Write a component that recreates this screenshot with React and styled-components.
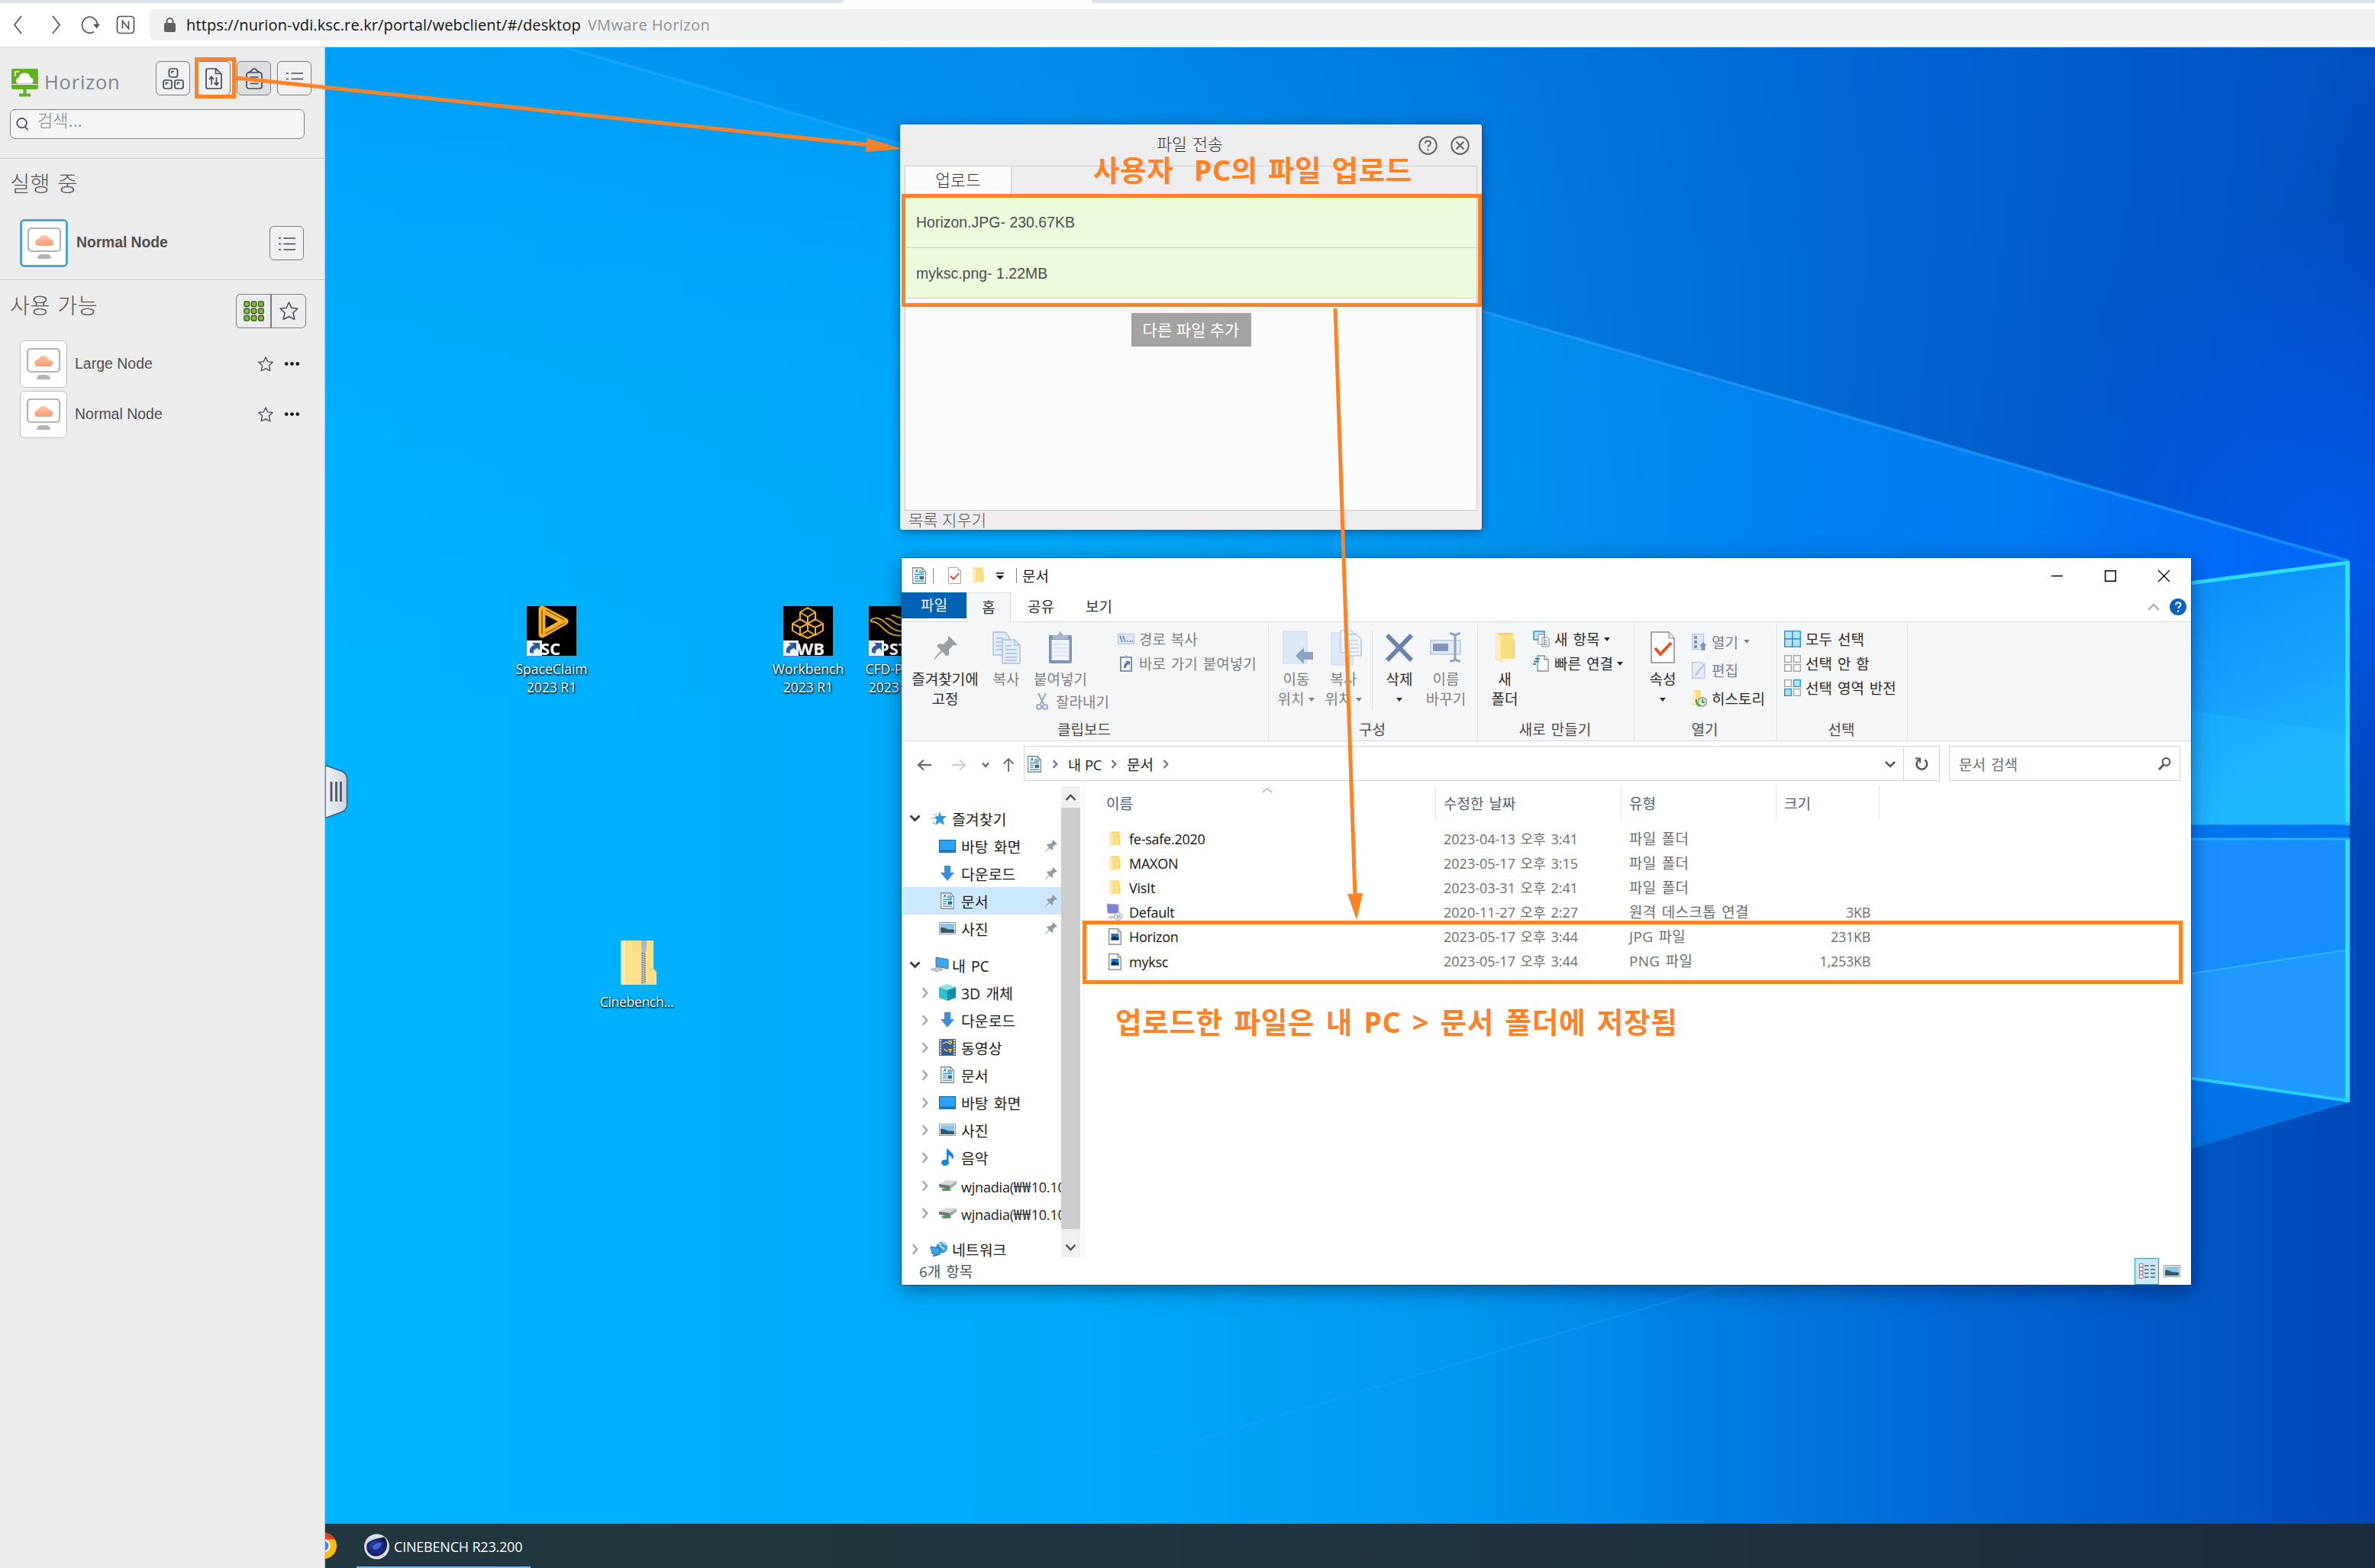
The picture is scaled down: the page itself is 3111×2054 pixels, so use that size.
import React from "react";
import styled, { createGlobalStyle } from "styled-components";

const ORANGE = "#ff8227";

const GlobalStyle = createGlobalStyle`
  * { box-sizing: border-box; }
  html, body { margin: 0; padding: 0; overflow: hidden; }
  body {
    font-family: "Open Sans", "Noto Sans CJK KR", sans-serif;
    font-size: 19px;
    color: #1b1b1b;
  }
`;

/* ---------- shared ---------- */
const Screen = styled.div`
  position: relative;
  width: 3111px;
  height: 2054px;
  display: flex;
  flex-direction: column;
  overflow: hidden;
  background: #fff;
`;
const Svg = styled.svg`
  display: block;
  flex: none;
  overflow: visible;
`;
const Text = styled.span`
  font-size: ${(p) => p.$size || 19}px;
  color: ${(p) => p.$color || "inherit"};
  letter-spacing: ${(p) => p.$ls || 0}px;
  word-spacing: ${(p) => p.$ws || 0}px;
  font-weight: ${(p) => p.$weight || 400};
  margin-left: ${(p) => p.$ml || 0}px;
  white-space: pre;
`;

/* ---------- browser chrome ---------- */
const TabStrip = styled.div`
  height: 4px;
  flex: none;
  background: #dde1ea;
  padding-left: 1105px;
`;
const ActiveTab = styled.div`
  width: 325px;
  height: 4px;
  background: #fdfdfe;
`;
const AddressBar = styled.div`
  height: 58px;
  flex: none;
  display: flex;
  align-items: center;
  padding-left: 16px;
  padding-bottom: 1px;
  border-bottom: 1px solid #d9dcdd;
  background: #fff;
`;
const NavIcons = styled.div`
  width: 180px;
  display: flex;
  align-items: center;
`;
const UrlField = styled.div`
  flex: 1;
  height: 41px;
  display: flex;
  align-items: center;
  padding-left: 19px;
  border-radius: 7px 0 0 7px;
  background: #eff1f2;
`;

/* ---------- body ---------- */
const Body = styled.div`
  flex: 1;
  display: flex;
  min-height: 0;
`;
const Sidebar = styled.aside`
  width: 426px;
  flex: none;
  background: #ececec;
  border-right: 1px solid #bcc4c8;
  font-family: "Liberation Sans", "Noto Sans CJK KR", sans-serif;
`;
const SideSection = styled.section`
  height: ${(p) => p.$h}px;
  border-bottom: ${(p) => (p.$last ? "none" : "1px solid #bdbdbd")};
  box-shadow: ${(p) => (p.$last ? "none" : "0 1px 0 #fafafa")};
`;
const SideTop = styled.div`
  display: flex;
  padding: 18px 0 0 15px;
  height: 81px;
`;
const Logo = styled.div`
  width: 189px;
  display: flex;
  padding-top: 10px;
  gap: 8px;
  font-family: "Open Sans", sans-serif;
`;
const LogoText = styled.span`
  font-size: 25.5px;
  line-height: 34px;
  font-weight: 500;
  color: #7c8790;
  letter-spacing: 0.8px;
`;
const ToolRow = styled.div`
  display: flex;
  gap: 8px;
`;
const ToolButton = styled.button`
  width: 45px;
  height: 45px;
  padding: 0;
  display: flex;
  align-items: center;
  justify-content: center;
  border: 1.5px solid #7b7e80;
  border-radius: 6px;
  background: ${(p) => (p.$on ? "#dddedf" : "#f0f0f0")};
`;
const SearchBox = styled.div`
  width: 386px;
  height: 39px;
  margin-left: 13px;
  padding: 0 0 0 7px;
  display: flex;
  align-items: center;
  gap: 11px;
  border: 1.5px solid #808080;
  border-radius: 7px;
  background: #f5f5f5;
`;
const SearchHint = styled.span`
  font-size: 22px;
  font-weight: 300;
  line-height: 28px;
  margin-bottom: 8px;
  color: #858585;
`;
const SideTitle = styled.h2`
  margin: 0;
  font-size: 28.5px;
  font-weight: 300;
  line-height: 40px;
  word-spacing: 2px;
  color: #555;
`;
const TitleRow = styled.div`
  display: flex;
  justify-content: space-between;
  align-items: flex-start;
  padding: ${(p) => p.$pt}px 24px 0 13px;
  height: ${(p) => p.$h}px;
`;
const Segmented = styled.div`
  width: 92px;
  height: 45px;
  display: flex;
  border: 1.5px solid #7b7e80;
  border-radius: 6px;
  margin-top: 4px;
`;
const Segment = styled.div`
  flex: 1;
  display: flex;
  align-items: center;
  justify-content: center;
  border-right: ${(p) => (p.$split ? "2px solid #7b7e80" : "none")};
`;
const NodeRow = styled.div`
  height: ${(p) => (p.$active ? 63 : 66)}px;
  display: flex;
  align-items: ${(p) => (p.$active ? "center" : "flex-start")};
  padding: 0 ${(p) => (p.$active ? 27 : 33)}px 0 26px;
`;
const NodeTile = styled.div`
  width: ${(p) => (p.$active ? 63 : 62)}px;
  height: ${(p) => (p.$active ? 63 : 62)}px;
  display: flex;
  align-items: center;
  justify-content: center;
  border-radius: 6px;
  background: #fff;
  border: ${(p) => (p.$active ? "3px solid #50a6cc" : "1px solid #bdbdbd")};
`;
const NodeName = styled.span`
  flex: 1;
  padding-left: ${(p) => (p.$active ? 11 : 10)}px;
  padding-bottom: ${(p) => (p.$active ? 3 : 0)}px;
  font-size: 19.4px;
  line-height: 60px;
  font-weight: ${(p) => (p.$active ? 700 : 400)};
  letter-spacing: ${(p) => (p.$active ? -0.1 : 0.05)}px;
  color: #4f4f4f;
`;
const NodeTools = styled.div`
  height: 62px;
  display: flex;
  align-items: center;
  gap: 15px;
`;

/* ---------- remote desktop ---------- */
const Desktop = styled.main`
  position: relative;
  flex: 1;
  overflow: hidden;
  background: #00a8fb;
`;
const Wallpaper = styled.svg`
  position: absolute;
  inset: 0;
`;
const Placed = styled.div`
  position: absolute;
  left: ${(p) => p.$x}px;
  top: ${(p) => p.$y}px;
`;
const Shortcut = styled(Placed)`
  width: 130px;
  display: flex;
  flex-direction: column;
  align-items: center;
  text-align: center;
`;
const ShortcutLabel = styled.span`
  margin-top: ${(p) => p.$mt}px;
  font-size: 17.5px;
  line-height: 24.3px;
  letter-spacing: ${(p) => p.$ls || 0}px;
  color: #fff;
  white-space: pre;
  text-shadow: 1px 1px 3px #000, 0 1px 2px rgba(0, 0, 0, 0.8);
`;
const Taskbar = styled(Placed)`
  width: 100%;
  height: 58px;
  display: flex;
  align-items: center;
  background: linear-gradient(90deg, #22373f, #20343f 50%, #1c2b3d);
`;
const TaskButton = styled.div`
  width: 228px;
  height: 58px;
  margin-left: 26px;
  padding: 4px 0 0 10px;
  display: flex;
  align-items: center;
  gap: 6px;
  border-bottom: 2px solid #76b9ed;
  color: #fff;
`;

/* ---------- file transfer dialog ---------- */
const Dialog = styled(Placed)`
  width: 762px;
  height: 531px;
  padding: 0 5.5px 0 6.5px;
  display: flex;
  flex-direction: column;
  border-radius: 3px;
  background: #ededed;
  box-shadow: 0 2px 14px rgba(0, 20, 70, 0.5), 0 0 0 1px rgba(90, 110, 130, 0.4);
`;
const DialogHead = styled.div`
  height: 54px;
  display: grid;
  grid-template-columns: 1fr auto 1fr;
  align-items: center;
`;
const DialogTitle = styled.span`
  font-size: 21.5px;
  font-weight: 300;
  line-height: 30px;
  word-spacing: 2px;
  color: #333;
  margin: 0 3px 3px 0;
`;
const HeadTools = styled.div`
  display: flex;
  justify-content: flex-end;
  gap: 17px;
  padding-right: 10px;
`;
const DialogPanel = styled.div`
  height: 452px;
  border: 1px solid #c9c9c9;
  background: #fcfcfc;
`;
const DialogTabs = styled.div`
  height: 38px;
  background: #ededed;
`;
const DialogTab = styled.div`
  width: 139px;
  height: 38px;
  line-height: 36px;
  text-align: center;
  background: #fcfcfc;
  border-right: 1px solid #c9c9c9;
`;
const FileLine = styled.div`
  height: ${(p) => p.$h}px;
  padding-left: 14px;
  padding-top: ${(p) => p.$pt || 0}px;
  line-height: 67px;
  background: #ebfbdc;
  border-bottom: 1px solid #c6d0bd;
  font-family: "Liberation Sans", sans-serif;
  font-size: 19.4px;
  letter-spacing: 0.05px;
  color: #4d4d4d;
`;
const AddFile = styled.button`
  display: block;
  width: 157px;
  height: 44px;
  margin: 19px auto 0;
  padding: 0 0 3px;
  border: 0;
  background: #a3a3a1;
  color: #fff;
  font: 400 21px "Open Sans", "Noto Sans CJK KR", sans-serif;
  white-space: nowrap;
`;
const DialogFoot = styled.div`
  line-height: 24px;
  padding-left: 5px;
`;

/* ---------- explorer ---------- */
const Explorer = styled(Placed)`
  width: 1689px;
  height: 952px;
  display: flex;
  flex-direction: column;
  background: #fff;
  box-shadow: 0 6px 24px rgba(0, 20, 70, 0.5), 0 0 0 1px rgba(20, 90, 150, 0.6);
`;
const TitleBar = styled.div`
  height: 45px;
  flex: none;
  display: flex;
  align-items: center;
  padding: 1px 28px 0 14px;
`;
const Bar = styled.div`
  width: 1px;
  height: 20px;
  background: #8b8b8b;
  margin: 0 ${(p) => p.$mr}px 0 ${(p) => p.$ml}px;
`;
const WindowButtons = styled.div`
  margin-left: auto;
  display: flex;
  align-items: center;
  gap: 55px;
`;
const RibbonTabs = styled.div`
  height: 38px;
  flex: none;
  display: flex;
  align-items: flex-start;
  padding-right: 6px;
`;
const RibbonTab = styled.div`
  width: ${(p) => p.$w}px;
  height: ${(p) => (p.$kind === "file" ? 34 : 39)}px;
  line-height: ${(p) => (p.$kind === "file" ? 34 : 38)}px;
  text-align: center;
  position: relative;
  z-index: 1;
  color: ${(p) => (p.$kind === "file" ? "#fff" : "#333")};
  background: ${(p) => (p.$kind === "file" ? "#0063b1" : p.$kind === "open" ? "#f5f6f7" : "none")};
  border: ${(p) => (p.$kind === "open" ? "1px solid #dadbdc" : "0")};
  border-bottom: 0;
`;
const RibbonHelp = styled.div`
  margin-left: auto;
  height: 38px;
  display: flex;
  align-items: center;
  gap: 13px;
`;
const Ribbon = styled.div`
  height: 157px;
  flex: none;
  display: flex;
  background: #f5f6f7;
  border-top: 1px solid #dadbdc;
  border-bottom: 1px solid #d3d5d7;
`;
const Group = styled.div`
  width: ${(p) => p.$w}px;
  height: 152px;
  margin-top: 2px;
  display: flex;
  flex-direction: column;
  justify-content: space-between;
  border-right: 1px solid #dfe1e3;
`;
const GroupRow = styled.div`
  display: flex;
  align-items: flex-start;
`;
const GroupLabel = styled.div`
  text-align: center;
  line-height: 26px;
  padding-right: 2px;
  color: #4a4a4a;
  word-spacing: 2px;
`;
const GroupRule = styled.div`
  width: 1px;
  height: 105px;
  margin: 8px 0 0 ${(p) => p.$ml}px;
  background: #dcdddf;
`;
const BigButton = styled.div`
  width: ${(p) => p.$w}px;
  margin-left: ${(p) => p.$ml || 0}px;
  padding-top: 8px;
  display: flex;
  flex-direction: column;
  align-items: center;
  color: ${(p) => (p.$off ? "#7f7f7f" : "#2b2b2b")};
`;
const BigIcon = styled.div`
  height: 46px;
  display: flex;
  align-items: center;
`;
const BigLine = styled.div`
  height: 25.5px;
  line-height: 25.5px;
  display: flex;
  align-items: center;
  gap: 6px;
  white-space: nowrap;
  margin-top: ${(p) => (p.$first ? 7 : 0)}px;
`;
const SmallCol = styled.div`
  margin-left: ${(p) => p.$ml}px;
  padding-top: ${(p) => p.$pt}px;
`;
const SmallRow = styled.div`
  height: ${(p) => p.$h}px;
  display: flex;
  align-items: center;
  white-space: nowrap;
  word-spacing: 2px;
  color: ${(p) => (p.$off ? "#7f7f7f" : "#2b2b2b")};
`;
const Slot = styled.div`
  width: ${(p) => p.$w}px;
  margin-left: ${(p) => p.$ml || 0}px;
  margin-right: ${(p) => (p.$mr === undefined ? 6 : p.$mr)}px;
  flex: none;
  display: flex;
  align-items: center;
  justify-content: ${(p) => (p.$end ? "flex-end" : "center")};
`;
const Caret = styled.i`
  width: 0;
  height: 0;
  margin-left: ${(p) => p.$ml || 0}px;
  border: 4.5px solid transparent;
  border-top: 5.5px solid currentColor;
  border-bottom: 0;
`;
const PathRow = styled.div`
  height: 59px;
  flex: none;
  display: flex;
  padding: 6px 14px 7px 20px;
`;
const PathNav = styled.div`
  width: 140px;
  display: flex;
  align-items: center;
  padding-top: 3px;
`;
const PathBox = styled.div`
  width: 1200px;
  height: 46px;
  display: flex;
  align-items: center;
  padding: 1px 0 0 4px;
  border: 1px solid #d5d5d5;
`;
const Refresh = styled.div`
  width: 47px;
  height: 44px;
  margin-left: 14px;
  margin-top: -1px;
  display: flex;
  align-items: center;
  justify-content: center;
  border-left: 1px solid #d5d5d5;
`;
const SearchField = styled.div`
  flex: 1;
  height: 46px;
  margin-left: 12px;
  padding: 1px 11px 0 12px;
  display: flex;
  align-items: center;
  justify-content: space-between;
  border: 1px solid #d5d5d5;
`;
const Panes = styled.div`
  flex: 1;
  min-height: 0;
  display: flex;
`;
const Tree = styled.div`
  width: 209px;
  flex: none;
  padding: 24px 0 0 1px;
  overflow: hidden;
`;
const TreeRow = styled.div`
  height: 36px;
  margin-top: ${(p) => p.$mt || 0}px;
  display: flex;
  align-items: center;
  white-space: nowrap;
  word-spacing: 2px;
  background: ${(p) => (p.$selected ? "#cce8ff" : "none")};
`;
const TreeName = styled.span`
  flex: 1;
  overflow: hidden;
  font-size: ${(p) => (p.$latin ? 18 : 19.4)}px;
  letter-spacing: ${(p) => (p.$latin ? -0.2 : 0)}px;
`;
const Won = styled.span`
  letter-spacing: 0.6px;
  font-size: 19.5px;
`;
const Scroll = styled.div`
  width: 25px;
  height: 617px;
  flex: none;
  display: flex;
  flex-direction: column;
  align-items: center;
  background: #f0f0f0;
`;
const ScrollEnd = styled.div`
  height: ${(p) => p.$h}px;
  padding-top: ${(p) => p.$pt || 0}px;
  display: flex;
  align-items: center;
`;
const Thumb = styled.div`
  width: 25px;
  height: 552px;
  background: #cdcdcd;
`;
const FileList = styled.div`
  flex: 1;
  margin-left: 4px;
  border-left: 1px solid #efefef;
`;
const listColumns = "461px 243px 203px 135px";
const ListHead = styled.div`
  position: relative;
  height: 42px;
  display: grid;
  grid-template-columns: ${listColumns};
`;
const HeadCell = styled.div`
  padding: 2px 0 0 ${(p) => p.$pl}px;
  line-height: 42px;
  border-right: 1px solid #e3e3e3;
  color: #4c607a;
  word-spacing: 2px;
`;
const SortMark = styled.div`
  position: absolute;
  left: 234px;
  top: 2px;
`;
const ListBody = styled.div`
  padding-top: 11px;
`;
const ListRow = styled.div`
  height: 32.1px;
  line-height: 32px;
  display: grid;
  grid-template-columns: ${listColumns};
  color: #6d6d6d;
  font-size: 18px;
`;
const NameCell = styled.div`
  padding-left: 30px;
  display: flex;
  align-items: center;
  color: #111;
  letter-spacing: -0.25px;
`;
const Cell = styled.div`
  padding-left: 10px;
  font-size: ${(p) => p.$size || 18}px;
  letter-spacing: ${(p) => p.$ls || 0}px;
  word-spacing: 2px;
  white-space: nowrap;
`;
const SizeCell = styled.div`
  padding-right: 12px;
  text-align: right;
  letter-spacing: -0.3px;
`;
const Status = styled.div`
  height: 36px;
  flex: none;
  display: flex;
  align-items: center;
  padding: 0 14px 0 23px;
  color: #40536b;
`;
const ViewModes = styled.div`
  margin-left: auto;
  display: flex;
  align-items: center;
  gap: 6px;
`;
const ViewOn = styled.div`
  width: 32px;
  height: 35px;
  display: flex;
  align-items: center;
  justify-content: center;
  border: 1.5px solid #2b9bc4;
  background: #cbe7f3;
`;

/* ---------- annotations ---------- */
const Marks = styled.svg`
  position: absolute;
  inset: 0;
`;
const Frame = styled(Placed)`
  width: ${(p) => p.$w}px;
  height: ${(p) => p.$h}px;
  border: 5px solid ${ORANGE};
`;
const Note = styled(Placed)`
  font-family: "Noto Sans", "Noto Sans CJK KR", sans-serif;
  font-size: 37.5px;
  line-height: 50px;
  font-weight: 700;
  letter-spacing: ${(p) => p.$ls}px;
  word-spacing: ${(p) => p.$ws}px;
  color: ${ORANGE};
  white-space: pre;
`;

/* ---------- icons ---------- */
const Chevron = ({ dir = "right", w = 8, h = 12, color = "#6b6b6b", sw = 2 }) => {
  const d = { right: "M2 1L8 6L2 11", left: "M8 1L2 6L8 11", down: "M1 3L5 8L9 3", up: "M1 8L5 3L9 8" }[dir];
  return (
    <Svg width={w} height={h} viewBox="0 0 10 12" preserveAspectRatio="none" fill="none" stroke={color} strokeWidth={sw}>
      <path d={d} vectorEffect="non-scaling-stroke" />
    </Svg>
  );
};
const ListIcon = () => (
  <Svg width="22" height="18" viewBox="0 0 22 18" stroke="#3f4b5b" strokeWidth="1.6">
    <path d="M0 2h3M0 9.500h3M0 17h3M6.500 2H22M6.500 9.500H22M6.500 17H22" />
  </Svg>
);
const StarIcon = ({ s, w = 1.5 }) => (
  <Svg width={s} height={s} viewBox="0 0 24 24" fill="none" stroke="#3f4b5b" strokeWidth={w} strokeLinejoin="round">
    <path d="M12 1l3.200 7 7.800 .9-5.700 5.300 1.700 8.300L12 19l-7 3.500 1.700-8.300L1 8.900 8.800 8z" vectorEffect="non-scaling-stroke" />
  </Svg>
);
const MonitorCloud = () => (
  <Svg width="44" height="42" viewBox="0 0 44 42">
    <defs>
      <linearGradient id="cloud" x1="0" y1="0" x2="0" y2="1">
        <stop offset="0" stopColor="#fdc3a5" />
        <stop offset="1" stopColor="#fc9d6e" />
      </linearGradient>
    </defs>
    <rect x="1" y="1" width="42" height="30" rx="4" fill="#fff" stroke="#b4b4b4" strokeWidth="2.200" />
    <path d="M14 24a4.500 4.500 0 0 1 .4-8.900 8 8 0 0 1 14.800 .2A4.400 4.400 0 0 1 30.500 24z" fill="url(#cloud)" />
    <path d="M13 41c.5-4 2-6 5-6h8c3 0 4.500 2 5 6z" fill="#b4b4b4" />
  </Svg>
);
const DocIcon = ({ w = 18, h = 22 }) => (
  <Svg width={w} height={h} viewBox="0 0 18 20" preserveAspectRatio="none">
    <path d="M.7.700H13L17.300 5V19.300H.7z" fill="#fff" stroke="#7d8790" strokeWidth="1.200" />
    <path d="M13 .7V5h4.300" fill="none" stroke="#7d8790" />
    <path d="M4 6l2-3 1 3M9 4.500h3M9 6.500h6M3 8.500h12" stroke="#1a86c2" strokeWidth="1.200" fill="none" />
    <path d="M3 11h5M3 13.500h5M3 16.500h12" stroke="#3389b8" strokeWidth="1.100" />
    <rect x="9.500" y="10.500" width="5.500" height="4" fill="#2a6c9c" />
  </Svg>
);
const FolderIcon = ({ w = 15, h = 20 }) => (
  <Svg width={w} height={h} viewBox="0 0 28 40" preserveAspectRatio="none">
    <path d="M1 1h24v9l2 2v23H10V40L1 35z" fill="#f5cf63" />
    <path d="M10 3h15v30l2 2H10z" fill="#fbdf83" />
    <path d="M1 1l8 4v34l-8-5z" fill="#ffedb0" />
  </Svg>
);
const CheckPage = ({ w = 32, h = 42 }) => (
  <Svg width={w} height={h} viewBox="0 0 32 42" preserveAspectRatio="none">
    <path d="M1 1h23l7 8v32H1z" fill="#fff" stroke="#8b8b8b" strokeWidth="1.500" />
    <path d="M24 1v8h7" fill="#eee" stroke="#8b8b8b" strokeWidth="1.200" />
    <path d="M6 22l7 8L27 15" fill="none" stroke="#e2561b" strokeWidth="4" />
  </Svg>
);
const PinIcon = ({ s = 16, color = "#8e9aa3" }) => (
  <Svg width={s} height={s} viewBox="0 0 30 30">
    <path d="M19 0L30 11l-3 1-2-.500-6 6 .5 6-3 2.500-5.500-6L1 30l-1-1 9.500-10.500L4 13l2.500-3 6 .5 6-6L18 2z" fill={color} />
  </Svg>
);
const CopyIcon = () => (
  <Svg width="37" height="43" viewBox="0 0 37 43" fill="#e4ecf7" stroke="#a9bcd8" strokeWidth="1.300">
    <path d="M1 1h15l6 6v24H1z" />
    <path d="M5 9h9M5 14h13M5 19h13M5 24h13" />
    <path d="M13 11h16l7 7v24H13z" />
    <path d="M29 11v7h7M17 19h8M17 24h15M17 29h15M17 34h15M17 38h15" fill="none" />
  </Svg>
);
const PasteIcon = ({ w = 32, h = 43 }) => (
  <Svg width={w} height={h} viewBox="0 0 32 43">
    <rect x="1" y="5" width="30" height="37" rx="2" fill="#7d93b8" />
    <rect x="4.500" y="11" width="23" height="27" fill="#f0f4fa" />
    <path d="M7 17h18M7 22h18M7 27h18M7 32h18" stroke="#c9d5e6" strokeWidth="1.200" />
    <path d="M6 10V5h6l4-5 4 5h6v5z" fill="#a9b6c8" />
  </Svg>
);
const PathIcon = () => (
  <Svg width="22" height="14" viewBox="0 0 22 14">
    <rect x=".5" y=".5" width="21" height="13" fill="#dbe5f3" stroke="#b3c3dc" />
    <path d="M3 3l3 8M7 3l3 8M12 10h2M15.500 10h2M18.500 10h1.500" stroke="#5f7aa8" strokeWidth="1.500" />
  </Svg>
);
const ShortcutPaste = () => (
  <Svg width="16" height="22" viewBox="0 0 16 22">
    <rect x="1" y="3" width="14" height="18" fill="#f3f7fc" stroke="#7d93b8" strokeWidth="2" />
    <path d="M4 4V2h2l2-2 2 2h2v2z" fill="#8fa2c2" />
    <path d="M5 17c0-4 1-6 4-7.500L7 8h6v6l-2-2c-2 1-3 3-3.500 5z" fill="#5878ab" />
  </Svg>
);
const CutIcon = () => (
  <Svg width="16" height="22" viewBox="0 0 16 22" fill="none" stroke="#96a9c6" strokeWidth="2">
    <path d="M3 0l7 14M13 0L6 14" />
    <circle cx="4" cy="18" r="3" />
    <circle cx="12" cy="18" r="3" />
  </Svg>
);
const MoveIcon = () => (
  <Svg width="40" height="42" viewBox="0 0 40 42">
    <path d="M3 0h31v42H3z" fill="#dde7f5" stroke="#c8d7eb" />
    <path d="M19 32L30 21v6h12v10H30v6z" fill="#8ea2c4" />
  </Svg>
);
const CopyToIcon = () => (
  <Svg width="40" height="46" viewBox="0 0 40 46">
    <path d="M4 4h28v42H4z" fill="#dde7f5" stroke="#c8d7eb" />
    <path d="M16 1h14l5 5v24H16z" fill="#eef3fa" stroke="#a9bcd8" />
    <path d="M23 6h14l6 6v22H23z" fill="#eef3fa" stroke="#94aacd" />
    <path d="M26 14h13M26 19h14M26 24h14M26 29h14" stroke="#a9bcd8" />
  </Svg>
);
const DeleteIcon = () => (
  <Svg width="38" height="37" viewBox="0 0 38 37" stroke="#6c82ab" strokeWidth="6">
    <path d="M3 2l32 33M35 2L3 35" />
  </Svg>
);
const RenameIcon = () => (
  <Svg width="42" height="38" viewBox="0 0 42 38" fill="none">
    <rect x="1" y="10" width="39" height="18" fill="#e4ecf7" stroke="#b3c5df" strokeWidth="1.500" />
    <rect x="4" y="14" width="20" height="10" fill="#7f95bb" />
    <path d="M26 1c4 0 7 1 7 4v28c0 3-3 4-7 4M40 1c-4 0-7 1-7 4M40 37c-4 0-7-1-7-4" stroke="#8ea2c4" strokeWidth="3" />
  </Svg>
);
const NewItemIcon = () => (
  <Svg width="22" height="22" viewBox="0 0 22 22" fill="#fff" stroke="#7e8b96">
    <rect x="1" y="1" width="14" height="11" fill="#bfe3f5" stroke="#3b92bd" strokeWidth="1.500" />
    <path d="M7 5h8v13H7zM12 9h7l2 2v10h-9z" />
    <path d="M14 13h5M14 16h5M14 18.500h5" />
  </Svg>
);
const EasyAccessIcon = () => (
  <Svg width="21" height="22" viewBox="0 0 21 22" fill="#fff" stroke="#8b8b8b" strokeWidth="1.300">
    <path d="M6 1h9l5 5v15H6z" />
    <path d="M15 1v5h5" />
    <path d="M3 5h6M1 8.500h7M0 12h4" stroke="#1f82b8" strokeWidth="1.800" />
  </Svg>
);
const OpenIcon = () => (
  <Svg width="20" height="22" viewBox="0 0 20 22">
    <rect x=".7" y=".7" width="15" height="20" fill="#dfe9f6" stroke="#b3c5df" />
    <path d="M3 3h4v4H3zM3 9h4v4H3zM3 15h4v4H3z" fill="#7f95bb" />
    <path d="M15 11l5 5h-2.500v6h-5v-6H10z" fill="#8194b8" />
  </Svg>
);
const EditIcon = () => (
  <Svg width="20" height="22" viewBox="0 0 20 22">
    <path d="M.7.700H12l5 5v15.600H.7z" fill="#e4edf8" stroke="#b3c5df" strokeWidth="1.300" />
    <path d="M18 3L7 17l-3 2 1-4L16 2z" fill="#b3c5df" />
  </Svg>
);
const HistoryIcon = () => (
  <Svg width="20" height="22" viewBox="0 0 20 22">
    <path d="M1 0h11v20H1z" fill="#fbdc7c" />
    <path d="M1 0l4 2v18l-4-2z" fill="#ffedb0" />
    <circle cx="14" cy="15.500" r="5.500" fill="#e9efe9" stroke="#8a9a8a" strokeWidth="1.500" />
    <path d="M6 12c-1 5 2 8 5 9M14 12v4h3" fill="none" stroke="#2fa334" strokeWidth="2" />
  </Svg>
);
/* "all" is one block with a cross through it, the other two are four separate tiles */
const SelectIcon = ({ on }) => {
  const joined = on.every(Boolean);
  const tile = joined ? 10.3 : 8.7;
  const step = joined ? 10.3 : 11.9;
  return (
    <Svg width="22" height="22" viewBox="0 0 22 22">
      {[[0, 0], [1, 0], [0, 1], [1, 1]].map(([x, y], i) => (
        <rect key={i} x={x * step + 0.7} y={y * step + 0.7} width={tile} height={tile} fill={on[i] ? "#b4e2fb" : "#fdfdfd"} stroke={on[i] ? "#2e92cc" : "#a3a3a3"} strokeWidth="1.400" />
      ))}
    </Svg>
  );
};
const DesktopIcon = () => (
  <Svg width="22" height="17" viewBox="0 0 22 17">
    <rect x=".5" y=".5" width="21" height="16" fill="#2ba3f5" stroke="#12629e" />
    <path d="M0 14.500h22" stroke="#12629e" strokeWidth="1.500" />
  </Svg>
);
const DownloadIcon = () => (
  <Svg width="18" height="20" viewBox="0 0 18 20">
    <path d="M5 0h8v9h5l-9 11L0 9h5z" fill="#3c8ee0" />
  </Svg>
);
const PictureIcon = ({ w = 22, h = 16 }) => (
  <Svg width={w} height={h} viewBox="0 0 22 16" preserveAspectRatio="none">
    <rect x=".5" y=".5" width="21" height="15" fill="#fff" stroke="#8f9499" />
    <path d="M2 2h18v12H2z" fill="#8fc4ea" />
    <path d="M2 7c3-1 6 1 9 2s6 0 9 1v4H2z" fill="#34596b" />
  </Svg>
);
const CubeIcon = () => (
  <Svg width="22" height="22" viewBox="0 0 22 22">
    <path d="M11 0l11 4-11 4L0 4z" fill="#8fe3ea" />
    <path d="M0 4l11 4v14L0 18z" fill="#35bfcb" />
    <path d="M22 4L11 8v14l11-4z" fill="#0f8fb0" />
  </Svg>
);
const VideoIcon = () => (
  <Svg width="22" height="22" viewBox="0 0 22 22">
    <rect width="22" height="22" fill="#5a6570" />
    <path d="M2 1v20M20 1v20" stroke="#e3e6e9" strokeWidth="2" strokeDasharray="2 1.500" />
    <rect x="4" y="1" width="14" height="9.500" fill="#2e5fb8" />
    <rect x="4" y="11.500" width="14" height="9.500" fill="#2a58ab" />
    <path d="M5 6l5-2 6 3M12 3h4v3M6 13l5 3M12 14h4l-2 4" stroke="#e8bb3d" strokeWidth="1.800" fill="none" />
  </Svg>
);
const MusicIcon = () => (
  <Svg width="17" height="22" viewBox="0 0 17 22">
    <ellipse cx="5" cy="18" rx="5" ry="4" fill="#1b82d8" />
    <path d="M7 18V0h2c1 4 8 5 7 11l-2 3c0-4-2-5-4.500-6v10z" fill="#1b82d8" />
  </Svg>
);
const DriveIcon = () => (
  <Svg width="23" height="16" viewBox="0 0 23 16">
    <path d="M0 6L9 1l14 1-9 6z" fill="#d5d8da" />
    <path d="M0 6l14 2v5L0 10z" fill="#6f7478" />
    <path d="M14 8l9-6v4l-9 7z" fill="#a5a9ac" />
    <path d="M3 12h12v3H5z" fill="#3aa545" />
  </Svg>
);
const QuickStar = () => (
  <Svg width="20" height="19" viewBox="0 0 20 19">
    <path d="M11 0l2 6h7l-5 4.500 2 7.500-6-4-6 4 2-7.500L4 7l5-1z" fill="#2b98e6" />
    <path d="M2 4h5M0 9h5M1 15h4" stroke="#8dcbf2" strokeWidth="1.500" />
  </Svg>
);
const PcIcon = () => (
  <Svg width="23" height="20" viewBox="0 0 23 20">
    <path d="M7 0l16 3v12L7 12z" fill="#3ba7ee" stroke="#4d6d85" />
    <path d="M0 16l8-3 8 3-7 3z" fill="#c4ccd3" stroke="#8b969f" strokeWidth=".7" />
  </Svg>
);
const NetworkIcon = () => (
  <Svg width="22" height="20" viewBox="0 0 22 20">
    <circle cx="14.500" cy="8" r="7.500" fill="#3f9bd8" />
    <path d="M9 4c3-3 5 0 4 2s4 1 5 5M15 1l5 4" stroke="#b5def5" strokeWidth="2" fill="none" />
    <path d="M0 7l12 2v9L2 16z" fill="#39a4ea" stroke="#1f6aa3" />
    <path d="M3 19l6-1" stroke="#3b6d92" strokeWidth="2" />
  </Svg>
);
const RdpIcon = () => (
  <Svg width="22" height="22" viewBox="0 0 22 22">
    <path d="M1 0l15 1v12L2 12z" fill="#7a80d6" stroke="#a6a9d5" />
    <path d="M3 16l8-1 2 4-9 1z" fill="#c9ced6" />
    <circle cx="16" cy="16.500" r="5" fill="#dfe5e8" stroke="#a9b3b9" />
    <path d="M14 15l2 2-2 2M18.500 14l-2 2 2 2" stroke="#5c9c58" fill="none" />
  </Svg>
);
const ImageFileIcon = () => (
  <Svg width="17" height="22" viewBox="0 0 17 22">
    <path d="M.7.700H12l4.300 4.500v16H.7z" fill="#fff" stroke="#7f7f7f" strokeWidth="1.200" />
    <path d="M12 .7v4.500h4.300" fill="none" stroke="#7f7f7f" />
    <rect x="3.500" y="7" width="10" height="8.500" fill="#1f74c4" />
    <path d="M3.500 15.500V13l4-3 3 2.500 3-1v4z" fill="#0e3357" />
  </Svg>
);
const ChromeIcon = () => (
  <Svg width="34" height="34" viewBox="0 0 34 34">
    <circle cx="17" cy="17" r="17" fill="#fbc116" />
    <path d="M2.300 8.500A17 17 0 0 1 31.700 8.500H17z" fill="#e0402f" />
    <circle cx="17" cy="17" r="8.500" fill="#fff" />
    <circle cx="17" cy="17" r="6.500" fill="#4286f5" />
  </Svg>
);
const CinebenchIcon = () => (
  <Svg width="33" height="34" viewBox="0 0 34 34">
    <defs>
      <radialGradient id="cine" cx=".45" cy=".5" r=".6">
        <stop offset="0" stopColor="#5d7de0" />
        <stop offset=".5" stopColor="#20308f" />
        <stop offset="1" stopColor="#0c1035" />
      </radialGradient>
    </defs>
    <circle cx="17" cy="17" r="17" fill="#dcdfe6" />
    <path d="M4 13C8 7 18 6 27 4c4 4 5 10 3 16-3 8-12 12-19 9C4 26 2 19 4 13z" fill="url(#cine)" />
    <circle cx="17" cy="19" r="7.500" fill="#1a2880" />
    <path d="M11 17c2-4 8-6 13-5-2 6-5 9-10 9-2 0-3-2-3-4z" fill="#4965cf" />
  </Svg>
);

const SHORTCUT_GLYPHS = {
  SC: (
    <g fill="none" strokeLinejoin="round">
      <path d="M20 4v33L50 20z" stroke="#f5ae24" strokeWidth="9" />
      <path d="M20 6v30M25 5l24 13M24 36l26-14" stroke="#4a3000" strokeWidth="1" />
      <path d="M25 14v13l12-7z" fill="#000" />
    </g>
  ),
  WB: (
    <g fill="none" stroke="#f5ae24" strokeWidth="2" strokeLinejoin="round">
      <path d="M32 2l10 6v9l-10 6-10-6V8zM22 8l10 6 10-6M32 14v9" />
      <path d="M22 17l10 6v9l-10 6-10-6v-9zM12 23l10 5 10-5M22 28v9" />
      <path d="M42 17l10 6v9l-10 6-10-6v-9zM32 23l10 5 10-5M42 28v9M22 37l10 5 10-5" />
    </g>
  ),
  PST: (
    <g fill="none" stroke="#d9a32a" strokeWidth="2">
      <path d="M2 20c3-6 10-5 15-2s12 12 20 14 20-1 28-8" />
      <path d="M2 20c8 0 12 4 18 10s14 10 24 8M22 16c7-1 10 6 16 8s14-2 26-14M30 12c6 0 8 4 12 3s8-6 14-12" />
    </g>
  ),
};
const AppTile = ({ code }) => (
  <Svg width="65" height="65" viewBox="0 0 65 65">
    <rect width="65" height="65" fill="#000" />
    {SHORTCUT_GLYPHS[code]}
    <text x={code === "PST" ? 13 : 18} y="63.500" fill="#fff" fontFamily="Open Sans, sans-serif" fontWeight="700" fontSize="22">
      {code}
    </text>
    <rect y="45" width="20" height="20" fill="#f4f6f9" />
    <path d="M4 61c-1-6 2-9 6-10l-3-3h10v10l-3-3c-3 1-6 3-5 7z" fill="#2c5aa3" />
  </Svg>
);
const ZipIcon = () => (
  <Svg width="47" height="58" viewBox="-2 0 47 58">
    <path d="M0 0h43v37l4 4v17H0z" fill="#fbe08a" />
    <path d="M0 0h6v58H0z" fill="#fde9a5" />
    <path d="M27 0h6v58h-6z" fill="#c9c9c4" />
    <path d="M28.500 16v40M31.500 17v38" stroke="#6f6c66" strokeWidth="2" strokeDasharray="1.500 1.500" />
    <path d="M27 0h7v10l-2 6h-3l-2-6z" fill="#b3b6b8" />
  </Svg>
);

/* ---------- data ---------- */
const SHARE = <>wjnadia(<Won>₩₩</Won>10.10</>;
const TREE = [
  { name: "즐겨찾기", icon: <QuickStar />, root: true, open: true },
  { name: "바탕 화면", icon: <DesktopIcon />, pin: true },
  { name: "다운로드", icon: <DownloadIcon />, pin: true },
  { name: "문서", icon: <DocIcon />, pin: true, selected: true },
  { name: "사진", icon: <PictureIcon />, pin: true },
  { name: "내 PC", icon: <PcIcon />, root: true, open: true, mt: 12 },
  { name: "3D 개체", icon: <CubeIcon />, closed: true },
  { name: "다운로드", icon: <DownloadIcon />, closed: true },
  { name: "동영상", icon: <VideoIcon />, closed: true },
  { name: "문서", icon: <DocIcon />, closed: true },
  { name: "바탕 화면", icon: <DesktopIcon />, closed: true },
  { name: "사진", icon: <PictureIcon />, closed: true },
  { name: "음악", icon: <MusicIcon />, closed: true },
  { name: SHARE, icon: <DriveIcon />, closed: true, latin: true, mt: 1 },
  { name: SHARE, icon: <DriveIcon />, closed: true, latin: true },
  { name: "네트워크", icon: <NetworkIcon />, root: true, mt: 11 },
];
const FILES = [
  ["fe-safe.2020", "2023-04-13 오후 3:41", "파일 폴더", "", "folder"],
  ["MAXON", "2023-05-17 오후 3:15", "파일 폴더", "", "folder"],
  ["VisIt", "2023-03-31 오후 2:41", "파일 폴더", "", "folder"],
  ["Default", "2020-11-27 오후 2:27", "원격 데스크톱 연결", "3KB", "rdp"],
  ["Horizon", "2023-05-17 오후 3:44", "JPG 파일", "231KB", "image"],
  ["myksc", "2023-05-17 오후 3:44", "PNG 파일", "1,253KB", "image"],
];
const FILE_ICONS = { folder: <FolderIcon />, rdp: <RdpIcon />, image: <ImageFileIcon /> };

/* ---------- parts ---------- */
function BrowserBar() {
  return (
    <>
      <TabStrip>
        <ActiveTab />
      </TabStrip>
      <AddressBar>
        <NavIcons>
          <Svg width="160" height="26" viewBox="0 0 160 26" fill="none" stroke="#555" strokeWidth="1.700">
            <path d="M12 2L3 13.500L12 25M53 2l9 11.500L53 25" />
            <path d="M107 21.500a10 10.500 0 1 1 4.500-8.500" transform="translate(0 1)" />
            <path d="M106 12.500h9l-4.500 6z" fill="#555" stroke="none" />
            <rect x="137.500" y="2.500" width="22" height="22" rx="4" />
            <path d="M144.500 18.500V8.500L152.500 18.500V8.500" />
          </Svg>
        </NavIcons>
        <UrlField>
          <Svg width="15" height="19" viewBox="0 0 15 19">
            <rect y="7" width="15" height="12" rx="2" fill="#5f6163" />
            <path d="M3.500 8V5a4 4 0 0 1 8 0v3" fill="none" stroke="#5f6163" strokeWidth="2" />
          </Svg>
          <Text $size={20} $ls={0.13} $ml={14} $color="#111">https://nurion-vdi.ksc.re.kr/portal/webclient/#/desktop</Text>
          <Text $size={20} $ls={0.4} $ml={9} $color="#8f9193">VMware Horizon</Text>
        </UrlField>
      </AddressBar>
    </>
  );
}

function HorizonSidebar() {
  return (
    <Sidebar>
      <SideSection $h={146}>
        <SideTop>
          <Logo>
            <Svg width="35" height="36" viewBox="0 0 35 36">
              <rect width="35" height="27" rx="2" fill="#60b022" />
              <path d="M5 10V4h5" fill="none" stroke="#fff" strokeWidth="1.500" />
              <path d="M8 19.500a4.500 4.500 0 0 1 1.500-8 8 8 0 0 1 15.500 0 4.500 4.500 0 0 1 2 8z" fill="#fff" />
              <path d="M0 20.500h35" stroke="#fff" strokeWidth="1.200" />
              <path d="M17.500 27v7M10 34.500h15" stroke="#60b022" strokeWidth="4" />
            </Svg>
            <LogoText>Horizon</LogoText>
          </Logo>
          <ToolRow>
            <ToolButton>
              <Svg width="28" height="28" viewBox="0 0 28 28" fill="none" stroke="#3f4b5b" strokeWidth="1.700">
                <rect x="8.500" y="1" width="11" height="11" rx="2.500" />
                <rect x="1" y="16" width="11" height="11" rx="2.500" />
                <rect x="16" y="16" width="11" height="11" rx="2.500" />
                <path d="M12 7V4.500h3M4.500 22v-2.500h3M19.500 22v-2.500h3" />
              </Svg>
            </ToolButton>
            <ToolButton>
              <Svg width="22" height="28" viewBox="0 0 22 28" fill="none" stroke="#3f4b5b" strokeWidth="1.700">
                <path d="M3 1h11l7 7v17a2 2 0 0 1-2 2H3a2 2 0 0 1-2-2V3a2 2 0 0 1 2-2zM13.500 1v6.500H21" />
                <path d="M8 22V12M5 15l3-3.500 3 3.500M14.500 12v10M11.500 19l3 3.500 3-3.500" />
              </Svg>
            </ToolButton>
            <ToolButton $on>
              <Svg width="22" height="28" viewBox="0 0 22 28" fill="none" stroke="#3f4b5b" strokeWidth="1.700">
                <rect x="1" y="6" width="20" height="21" rx="3" />
                <path d="M4 6C5 4 7 5 8 3c1-2.500 5-2.500 6 0 1 2 3 1 4 3M5.500 12h11M5.500 16h11M5.500 20.500h11" />
              </Svg>
            </ToolButton>
            <ToolButton>
              <ListIcon />
            </ToolButton>
          </ToolRow>
        </SideTop>
        <SearchBox>
          <Svg width="17" height="17" viewBox="0 0 18 19" fill="none" stroke="#3f4b5b" strokeWidth="1.900">
            <circle cx="8" cy="8" r="7" />
            <path d="M12 13l5 5" />
          </Svg>
          <SearchHint>검색...</SearchHint>
        </SearchBox>
      </SideSection>
      <SideSection $h={159}>
        <TitleRow $pt={13} $h={79}>
          <SideTitle>실행 중</SideTitle>
        </TitleRow>
        <NodeRow $active>
          <NodeTile $active>
            <MonitorCloud />
          </NodeTile>
          <NodeName $active>Normal Node</NodeName>
          <ToolButton>
            <ListIcon />
          </ToolButton>
        </NodeRow>
      </SideSection>
      <SideSection $last $h={300}>
        <TitleRow $pt={14} $h={79}>
          <SideTitle>사용 가능</SideTitle>
          <Segmented>
            <Segment $split>
              <Svg width="27" height="27" viewBox="0 0 27 27" fill="#80bf36" stroke="#3f5a2a" strokeWidth="1.500">
                {[0, 1, 2].map((r) => [0, 1, 2].map((c) => <rect key={`${r}${c}`} x={1 + c * 9.3} y={1 + r * 9.3} width="6.500" height="6.500" rx="1.500" />))}
              </Svg>
            </Segment>
            <Segment>
              <StarIcon s={25} />
            </Segment>
          </Segmented>
        </TitleRow>
        {["Large Node", "Normal Node"].map((n) => (
          <NodeRow key={n}>
            <NodeTile>
              <MonitorCloud />
            </NodeTile>
            <NodeName>{n}</NodeName>
            <NodeTools>
              <StarIcon s={20} w={1.3} />
              <Svg width="19" height="5" viewBox="0 0 19 5">
                <circle cx="2.200" cy="1.500" r="2.200" />
                <circle cx="9.500" cy="1.500" r="2.200" />
                <circle cx="16.800" cy="1.500" r="2.200" />
              </Svg>
            </NodeTools>
          </NodeRow>
        ))}
      </SideSection>
    </Sidebar>
  );
}

function WallpaperArt() {
  return (
    <Wallpaper width="2685" height="1992" viewBox="426 62 2685 1992">
      <defs>
        <linearGradient id="base" x1="0" y1="0" x2="1" y2="0">
          <stop offset="0" stopColor="#00b5ff" />
          <stop offset=".35" stopColor="#00abfa" />
          <stop offset=".55" stopColor="#0098ee" />
          <stop offset=".78" stopColor="#006ad6" />
          <stop offset="1" stopColor="#0148b6" />
        </linearGradient>
        <linearGradient id="topShade" gradientUnits="userSpaceOnUse" x1="426" y1="0" x2="3111" y2="0">
          <stop offset="0" stopColor="#0080e8" stopOpacity=".15" />
          <stop offset=".55" stopColor="#0062cc" stopOpacity=".4" />
          <stop offset="1" stopColor="#0240b4" stopOpacity=".35" />
        </linearGradient>
        <linearGradient id="topFade" x1="0" y1="0" x2="0" y2="1">
          <stop offset="0" stopColor="#0074e6" stopOpacity=".34" />
          <stop offset=".5" stopColor="#0084ee" stopOpacity=".12" />
          <stop offset="1" stopColor="#0090f4" stopOpacity="0" />
        </linearGradient>
        <radialGradient id="glow" gradientUnits="userSpaceOnUse" cx="2980" cy="860" r="1150">
          <stop offset="0" stopColor="#0080ff" stopOpacity=".8" />
          <stop offset=".5" stopColor="#0088ff" stopOpacity=".65" />
          <stop offset="1" stopColor="#0098ff" stopOpacity="0" />
        </radialGradient>
        <radialGradient id="halo" gradientUnits="userSpaceOnUse" cx="3060" cy="700" r="420">
          <stop offset="0" stopColor="#0062ff" stopOpacity=".7" />
          <stop offset="1" stopColor="#0055ff" stopOpacity="0" />
        </radialGradient>
        <linearGradient id="pane" x1="0" y1="0" x2=".3" y2="1">
          <stop offset="0" stopColor="#0b8bf8" />
          <stop offset="1" stopColor="#1fb6ff" />
        </linearGradient>
        <linearGradient id="line" gradientUnits="userSpaceOnUse" x1="740" y1="0" x2="3077" y2="0">
          <stop offset="0" stopColor="#3fb8ff" stopOpacity=".3" />
          <stop offset=".6" stopColor="#2aa8ff" stopOpacity=".6" />
          <stop offset="1" stopColor="#19a4ff" stopOpacity=".7" />
        </linearGradient>
      </defs>
      <rect x="426" y="62" width="2685" height="1992" fill="url(#base)" />
      <rect x="426" y="62" width="2685" height="900" fill="url(#topFade)" />
      <path d="M740 62H3111V740H3077z" fill="url(#topShade)" />
      <path d="M426 62H740L3077 736V1443L426 2200z" fill="url(#glow)" />
      <circle cx="3060" cy="700" r="420" fill="url(#halo)" />
      <path d="M740 62L3077 735" stroke="url(#line)" strokeWidth="4" />
      <path d="M3077 1443L1500 1906" stroke="#23a0ff" strokeOpacity=".3" strokeWidth="3" />
      <path d="M2860 765L3077 736V1080H2860z" fill="url(#pane)" />
      <path d="M2860 930L3077 960V1080H2860z" fill="#22c4ff" opacity=".25" />
      <path d="M2860 1098H3077V1443L2860 1411z" fill="#188efc" />
      <path d="M2860 1277L3077 1244V1443L2860 1411z" fill="#2aa2ff" opacity=".5" />
      <path d="M2860 1277L3077 1244" stroke="#2db6ff" strokeWidth="2" />
      <g fill="none" stroke="#2fdcff">
        <path d="M2860 765L3075 737" strokeWidth="5" />
        <path d="M3075 735V1081M3075 1098V1444" strokeWidth="6" />
        <path d="M2860 1079H3077M2860 1099H3077" strokeWidth="3" stroke="#22b4ff" />
        <path d="M2860 1411L3077 1442" strokeWidth="4" stroke="#28cfff" />
      </g>
    </Wallpaper>
  );
}

function TransferDialog() {
  return (
    <Dialog $x={752.5} $y={101}>
      <DialogHead>
        <span />
        <DialogTitle>파일 전송</DialogTitle>
        <HeadTools>
          <Svg width="25" height="25" viewBox="0 0 25 25" fill="none" stroke="#666" strokeWidth="2">
            <circle cx="12.500" cy="12.500" r="11.300" />
            <path d="M9 10c0-5 7-4.500 7-.500 0 2.500-3.500 3-3.500 5.500M12.500 17v2.500" />
          </Svg>
          <Svg width="25" height="25" viewBox="0 0 25 25" fill="none" stroke="#666" strokeWidth="2">
            <circle cx="12.500" cy="12.500" r="11.300" />
            <path d="M7.500 7.500l10 10M17.500 7.500l-10 10" />
          </Svg>
        </HeadTools>
      </DialogHead>
      <DialogPanel>
        <DialogTabs>
          <DialogTab>
            <Text $size={21.5} $weight={300} $color="#333">업로드</Text>
          </DialogTab>
        </DialogTabs>
        <FileLine $h={69} $pt={2}>Horizon.JPG- 230.67KB</FileLine>
        <FileLine $h={66}>myksc.png- 1.22MB</FileLine>
        <AddFile>다른 파일 추가</AddFile>
      </DialogPanel>
      <DialogFoot>
        <Text $size={21} $weight={300} $color="#555">목록 지우기</Text>
      </DialogFoot>
    </Dialog>
  );
}

function RibbonBar() {
  return (
    <Ribbon>
      <Group $w={481}>
        <GroupRow>
          <BigButton $w={104} $ml={5}>
            <BigIcon><PinIcon s={31} color="#98a0a3" /></BigIcon>
            <BigLine $first>즐겨찾기에</BigLine>
            <BigLine>고정</BigLine>
          </BigButton>
          <BigButton $w={46} $ml={5} $off>
            <BigIcon><CopyIcon /></BigIcon>
            <BigLine $first>복사</BigLine>
          </BigButton>
          <SmallCol $ml={8} $pt={0}>
            <BigButton $w={80} $off>
              <BigIcon><PasteIcon /></BigIcon>
              <BigLine $first>붙여넣기</BigLine>
            </BigButton>
            <SmallCol $ml={8} $pt={2}>
              <SmallRow $h={27} $off><Slot $w={16} $mr={10}><CutIcon /></Slot>잘라내기</SmallRow>
            </SmallCol>
          </SmallCol>
          <SmallCol $ml={11} $pt={4}>
            <SmallRow $h={32} $off><Slot $w={22}><PathIcon /></Slot>경로 복사</SmallRow>
            <SmallRow $h={32} $off><Slot $w={22}><ShortcutPaste /></Slot>바로 가기 붙여넣기</SmallRow>
          </SmallCol>
        </GroupRow>
        <GroupLabel>클립보드</GroupLabel>
      </Group>
      <Group $w={274}>
        <GroupRow>
          <BigButton $w={60} $ml={6} $off>
            <BigIcon><MoveIcon /></BigIcon>
            <BigLine $first>이동</BigLine>
            <BigLine>위치<Caret /></BigLine>
          </BigButton>
          <BigButton $w={60} $ml={2} $off>
            <BigIcon><CopyToIcon /></BigIcon>
            <BigLine $first>복사</BigLine>
            <BigLine>위치<Caret /></BigLine>
          </BigButton>
          <GroupRule $ml={7} />
          <BigButton $w={50} $ml={10}>
            <BigIcon><DeleteIcon /></BigIcon>
            <BigLine $first>삭제</BigLine>
            <BigLine><Caret /></BigLine>
          </BigButton>
          <BigButton $w={60} $ml={6} $off>
            <BigIcon><RenameIcon /></BigIcon>
            <BigLine $first>이름</BigLine>
            <BigLine>바꾸기</BigLine>
          </BigButton>
        </GroupRow>
        <GroupLabel>구성</GroupLabel>
      </Group>
      <Group $w={205}>
        <GroupRow>
          <BigButton $w={50} $ml={10}>
            <BigIcon><FolderIcon w={27} h={40} /></BigIcon>
            <BigLine $first>새</BigLine>
            <BigLine>폴더</BigLine>
          </BigButton>
          <SmallCol $ml={11} $pt={4}>
            <SmallRow $h={32}><Slot $w={23}><NewItemIcon /></Slot>새 항목<Caret $ml={6} /></SmallRow>
            <SmallRow $h={32}><Slot $w={23}><EasyAccessIcon /></Slot>빠른 연결<Caret $ml={5} /></SmallRow>
          </SmallCol>
        </GroupRow>
        <GroupLabel>새로 만들기</GroupLabel>
      </Group>
      <Group $w={187}>
        <GroupRow>
          <BigButton $w={50} $ml={12}>
            <BigIcon><CheckPage /></BigIcon>
            <BigLine $first>속성</BigLine>
            <BigLine><Caret /></BigLine>
          </BigButton>
          <SmallCol $ml={13} $pt={5}>
            <SmallRow $h={37} $off><Slot $w={20}><OpenIcon /></Slot>열기<Caret $ml={7} /></SmallRow>
            <SmallRow $h={37} $off><Slot $w={20}><EditIcon /></Slot>편집</SmallRow>
            <SmallRow $h={37}><Slot $w={20}><HistoryIcon /></Slot>히스토리</SmallRow>
          </SmallCol>
        </GroupRow>
        <GroupLabel>열기</GroupLabel>
      </Group>
      <Group $w={171}>
        <GroupRow>
          <SmallCol $ml={9} $pt={4}>
            <SmallRow $h={32}><Slot $w={22}><SelectIcon on={[1, 1, 1, 1]} /></Slot>모두 선택</SmallRow>
            <SmallRow $h={32}><Slot $w={22}><SelectIcon on={[0, 0, 0, 0]} /></Slot>선택 안 함</SmallRow>
            <SmallRow $h={32}><Slot $w={22}><SelectIcon on={[0, 1, 1, 0]} /></Slot>선택 영역 반전</SmallRow>
          </SmallCol>
        </GroupRow>
        <GroupLabel>선택</GroupLabel>
      </Group>
    </Ribbon>
  );
}

function TreeItem({ item }) {
  return (
    <TreeRow $mt={item.mt} $selected={item.selected}>
      {item.root ? (
        <>
          <Slot $w={33} $mr={3}>
            {item.open ? <Chevron dir="down" w={15} h={14} color="#404040" sw={3} /> : <Chevron w={9} h={15} color="#a6a6a6" sw={2.5} />}
          </Slot>
          <Slot $w={24} $mr={5}>{item.icon}</Slot>
        </>
      ) : (
        <>
          <Slot $w={34} $mr={13} $end>{item.closed && <Chevron w={9} h={15} color="#a6a6a6" sw={2.5} />}</Slot>
          <Slot $w={24}>{item.icon}</Slot>
        </>
      )}
      <TreeName $latin={item.latin}>{item.name}</TreeName>
      {item.pin && <Slot $w={16} $mr={5}><PinIcon /></Slot>}
    </TreeRow>
  );
}

function ExplorerWindow() {
  return (
    <Explorer $x={755} $y={669}>
      <TitleBar>
        <DocIcon />
        <Bar $ml={9} $mr={19} />
        <CheckPage w={17} h={22} />
        <Slot $w={15} $ml={15} $mr={16}><FolderIcon w={15} h={22} /></Slot>
        <Svg width="10" height="9" viewBox="0 0 10 9">
          <path d="M0 0h10v1.500H0zM0 4h10L5 9z" />
        </Svg>
        <Bar $ml={16} $mr={7} />
        <Text>문서</Text>
        <WindowButtons>
          <Svg width="15" height="15" viewBox="0 0 15 15" stroke="#000" strokeWidth="1.500"><path d="M0 7.500h15" /></Svg>
          <Svg width="15" height="15" viewBox="0 0 15 15" stroke="#000" strokeWidth="1.500" fill="none"><path d="M.7.700h13.600v13.600H.7z" /></Svg>
          <Svg width="15" height="15" viewBox="0 0 15 15" stroke="#000" strokeWidth="1.300"><path d="M0 0l15 15M15 0L0 15" /></Svg>
        </WindowButtons>
      </TitleBar>
      <RibbonTabs>
        <RibbonTab $w={85} $kind="file">파일</RibbonTab>
        <RibbonTab $w={58} $kind="open">홈</RibbonTab>
        <RibbonTab $w={79}>공유</RibbonTab>
        <RibbonTab $w={73}>보기</RibbonTab>
        <RibbonHelp>
          <Svg width="16" height="9" viewBox="0 0 16 9" fill="none" stroke="#a5a5a5" strokeWidth="2"><path d="M1 8l7-7 7 7" /></Svg>
          <Svg width="22" height="22" viewBox="0 0 22 22">
            <circle cx="11" cy="11" r="11" fill="#0a62bd" />
            <path d="M8 8.500c0-4.500 6.500-4 6.500-.500 0 2.500-3.200 2.500-3.200 5M11.200 15.500v2.300" fill="none" stroke="#fff" strokeWidth="2" />
          </Svg>
        </RibbonHelp>
      </RibbonTabs>
      <RibbonBar />
      <PathRow>
        <PathNav>
          <Svg width="128" height="20" viewBox="0 0 128 20" fill="none" stroke="#6b6b6b" strokeWidth="2.300">
            <path d="M19 10H2M9 3.500L2 10l7 6.500" />
            <path d="M46 10h17M56 3.500L63 10l-7 6.500" stroke="#cfcfcf" />
            <path d="M86 7.500l4 4.500 4-4.500" />
            <path d="M120 19V2M113.500 8.500L120 2l6.500 6.500" strokeWidth="1.900" />
          </Svg>
        </PathNav>
        <PathBox>
          <DocIcon />
          <Slot $w={8} $ml={14} $mr={13}><Chevron /></Slot>
          <Text $size={18.5} $ls={-0.4} $ws={1}>내 PC</Text>
          <Slot $w={8} $ml={12} $mr={13}><Chevron /></Slot>
          <Text>문서</Text>
          <Slot $w={8} $ml={12} $mr={938}><Chevron /></Slot>
          <Svg width="14" height="14" viewBox="0 0 14 14" fill="none" stroke="#555" strokeWidth="2.500"><path d="M1 4l6 6 6-6" /></Svg>
          <Refresh style={{ marginLeft: "auto" }}>
            <Svg width="17" height="17" viewBox="0 0 17 17" fill="none" stroke="#555" strokeWidth="2.500">
              <path d="M12.500 3.500A6.800 6.800 0 1 1 5 3" />
              <path d="M0 1.500h6v6" strokeWidth="2" />
            </Svg>
          </Refresh>
        </PathBox>
        <SearchField>
          <Text $color="#6d6d6d" $ws={2}>문서 검색</Text>
          <Svg width="17" height="17" viewBox="0 0 17 17" fill="none" stroke="#5c5c5c">
            <circle cx="10.500" cy="6" r="4.800" strokeWidth="2.200" />
            <path d="M7 10l-6 6" strokeWidth="3" />
          </Svg>
        </SearchField>
      </PathRow>
      <Panes>
        <Tree>
          {TREE.map((item, i) => <TreeItem key={i} item={item} />)}
        </Tree>
        <Scroll>
          <ScrollEnd $h={28} $pt={3}><Chevron dir="up" w={15} h={15} color="#505050" sw={2.5} /></ScrollEnd>
          <Thumb />
          <ScrollEnd $h={37} $pt={12}><Chevron dir="down" w={15} h={15} color="#505050" sw={2.5} /></ScrollEnd>
        </Scroll>
        <FileList>
          <ListHead>
            <HeadCell $pl={29}>이름</HeadCell>
            <HeadCell $pl={10}>수정한 날짜</HeadCell>
            <HeadCell $pl={10}>유형</HeadCell>
            <HeadCell $pl={10}>크기</HeadCell>
            <SortMark><Svg width="12" height="6" viewBox="0 0 12 6" fill="none" stroke="#777"><path d="M0 6l6-5 6 5" /></Svg></SortMark>
          </ListHead>
          <ListBody>
            {FILES.map(([name, date, type, size, kind]) => (
              <ListRow key={name}>
                <NameCell><Slot $w={20} $mr={9}>{FILE_ICONS[kind]}</Slot>{name}</NameCell>
                <Cell $ls={0}>{date}</Cell>
                <Cell $size={19} $ls={0.3}>{type}</Cell>
                <SizeCell>{size}</SizeCell>
              </ListRow>
            ))}
          </ListBody>
        </FileList>
      </Panes>
      <Status>
        <Text $ws={2}>6개 항목</Text>
        <ViewModes>
          <ViewOn>
            <Svg width="21" height="20" viewBox="0 0 21 20" fill="#fff" stroke="#8b7d7d">
              <path d="M.5.500h4.500v4.500H.5zM.5 5.200h4.500v4.500H.5zM.5 10h4.500v4.500H.5zM.5 14.800h4.500v4.500H.5z" />
              <path d="M7 3h5.500M15 3h6M7 8h5.500M15 8h6M7 13h5.500M15 13h6M7 18h5.500M15 18h6" stroke="#55606a" strokeWidth="1.300" />
            </Svg>
          </ViewOn>
          <PictureIcon />
        </ViewModes>
      </Status>
    </Explorer>
  );
}

export default function App() {
  return (
    <>
      <GlobalStyle />
      <Screen>
        <BrowserBar />
        <Body>
          <HorizonSidebar />
          <Desktop>
            <WallpaperArt />
            <Shortcut $x={231.5} $y={732}>
              <AppTile code="SC" />
              <ShortcutLabel $mt={5}>{"SpaceClaim\n2023 R1"}</ShortcutLabel>
            </Shortcut>
            <Shortcut $x={567.5} $y={732}>
              <AppTile code="WB" />
              <ShortcutLabel $mt={5}>{"Workbench\n2023 R1"}</ShortcutLabel>
            </Shortcut>
            <Shortcut $x={679.5} $y={732}>
              <AppTile code="PST" />
              <ShortcutLabel $mt={5}>{"CFD-Post\n2023 R1"}</ShortcutLabel>
            </Shortcut>
            <Shortcut $x={343} $y={1170}>
              <ZipIcon />
              <ShortcutLabel $mt={10} $ls={-0.3}>Cinebench...</ShortcutLabel>
            </Shortcut>
            <Placed $x={0} $y={940}>
              <Svg width="30" height="70" viewBox="0 0 30 70">
                <defs>
                  <linearGradient id="grip" x1="0" y1="0" x2="1" y2="0">
                    <stop offset="0" stopColor="#f2f2f3" />
                    <stop offset="1" stopColor="#cdd5dc" />
                  </linearGradient>
                </defs>
                <path d="M0 .5L21 8q7.500 3 7.500 10V52q0 7-7.500 10L0 69.500z" fill="url(#grip)" stroke="#2a5f85" strokeWidth="1.500" />
                <path d="M8 22v26M14.500 22v26M20.500 22v26" stroke="#44586a" strokeWidth="2.800" />
              </Svg>
            </Placed>
            <TransferDialog />
            <ExplorerWindow />
            <Taskbar $x={0} $y={1934}>
              <Slot $w={15} $mr={0} $end><ChromeIcon /></Slot>
              <TaskButton>
                <CinebenchIcon />
                <Text $size={18} $ls={-0.2}>CINEBENCH R23.200</Text>
              </TaskButton>
            </Taskbar>
          </Desktop>
        </Body>
        <Frame $x={255} $y={75} $w={54} $h={54} />
        <Frame $x={1181} $y={254} $w={760} $h={148} />
        <Frame $x={1418} $y={1206} $w={1441} $h={83} />
        <Marks width="3111" height="2054" viewBox="0 0 3111 2054">
          <path d="M309 102L1140 190" stroke={ORANGE} strokeWidth="5" />
          <path d="M1182 195L1136 181L1134 199z" fill={ORANGE} />
          <path d="M1749 404L1775 1175" stroke={ORANGE} strokeWidth="5" />
          <path d="M1777 1205L1765 1171L1785 1170z" fill={ORANGE} />
        </Marks>
        <Note $x={1432} $y={198} $ls={0.6} $ws={3}>{"사용자  PC의 파일 업로드"}</Note>
        <Note $x={1461} $y={1314} $ls={0.75} $ws={4}>{"업로드한 파일은 내 PC > 문서 폴더에 저장됨"}</Note>
      </Screen>
    </>
  );
}
